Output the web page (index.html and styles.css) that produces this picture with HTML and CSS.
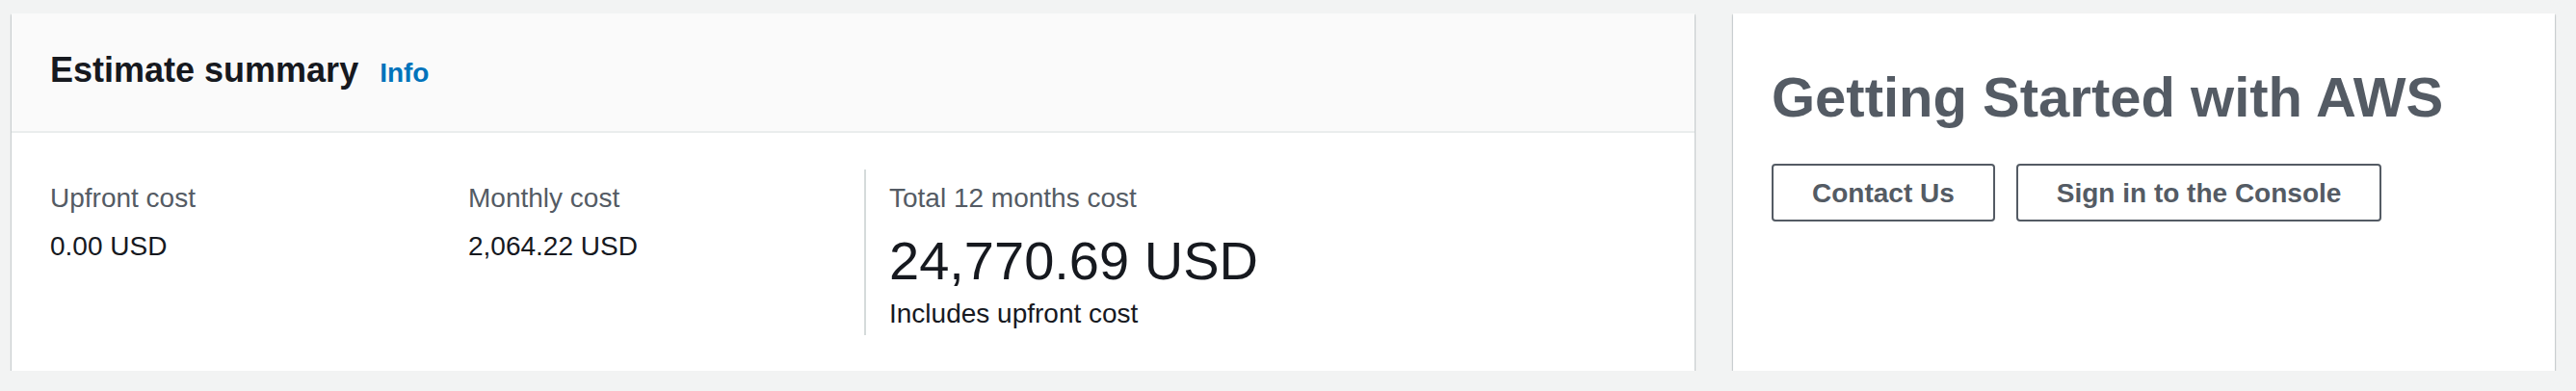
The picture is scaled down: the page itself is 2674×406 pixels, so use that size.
FILE: index.html
```html
<!DOCTYPE html>
<html lang="en">
<head>
<meta charset="utf-8">
<title>Estimate summary</title>
<link rel="stylesheet" href="styles.css">
</head>
<body>
<main class="layout">
  <section class="card summary">
    <header class="card-header">
      <h2 class="card-title">Estimate summary</h2>
      <a class="info-link" href="#">Info</a>
    </header>
    <div class="card-body">
      <div class="metric">
        <div class="metric-label">Upfront cost</div>
        <div class="metric-value">0.00 USD</div>
      </div>
      <div class="metric">
        <div class="metric-label">Monthly cost</div>
        <div class="metric-value">2,064.22 USD</div>
      </div>
      <div class="metric metric-total">
        <div class="metric-label">Total 12 months cost</div>
        <div class="metric-big">24,770.69 USD</div>
        <div class="metric-note">Includes upfront cost</div>
      </div>
    </div>
  </section>
  <section class="card getting-started">
    <h1 class="gs-title">Getting Started with AWS</h1>
    <div class="gs-actions">
      <a class="btn" href="#">Contact Us</a>
      <a class="btn" href="#">Sign in to the Console</a>
    </div>
  </section>
</main>
</body>
</html>
```
FILE: styles.css
```css
* { box-sizing: border-box; }

html, body {
  margin: 0;
  padding: 0;
  background: #f2f3f3;
  font-family: "Liberation Sans", Arial, sans-serif;
  color: #16191f;
}

.layout {
  display: grid;
  grid-template-columns: 1747px 853px;
  column-gap: 40px;
  padding: 14px 22px 0 12px;
}

.card {
  background: #ffffff;
  height: 371px;
  box-shadow: 0 2px 2px 0 rgba(0, 28, 36, 0.22),
              1px 1px 1px 0 rgba(0, 28, 36, 0.1),
              -1px 1px 1px 0 rgba(0, 28, 36, 0.1);
}

.card-header {
  display: flex;
  align-items: baseline;
  gap: 22px;
  background: #fafafa;
  border-bottom: 2px solid #eaeded;
  padding: 37px 40px 38px 40px;
}

.card-title {
  margin: 0;
  font-size: 36px;
  line-height: 44px;
  font-weight: 700;
  color: #16191f;
}

.info-link {
  font-size: 28px;
  line-height: 44px;
  font-weight: 700;
  color: #0073bb;
  text-decoration: none;
}

.card-body {
  display: grid;
  grid-template-columns: 434px 411px 1fr;
  padding: 38px 40px 41px 40px;
}

.metric {
  padding-top: 10px;
  min-height: 172px;
}

.metric-total {
  border-left: 2px solid #d5dbdb;
  padding-left: 24px;
}

.metric-label {
  font-size: 28px;
  line-height: 40px;
  color: #545b64;
  margin-bottom: 10px;
}

.metric-value {
  font-size: 28px;
  line-height: 40px;
  color: #16191f;
  margin-top: 1px;
}

.metric-big {
  font-size: 56px;
  line-height: 70px;
  color: #16191f;
}

.metric-note {
  font-size: 28px;
  line-height: 40px;
  color: #16191f;
}

.getting-started {
  padding: 51px 40px 0 40px;
}

.gs-title {
  margin: 0;
  font-size: 58px;
  line-height: 72px;
  font-weight: 700;
  color: #545b64;
}

.gs-actions {
  display: flex;
  gap: 22px;
  margin-top: 33px;
}

.btn {
  display: inline-block;
  border: 2px solid #545b64;
  border-radius: 4px;
  padding: 9px 40px 7px 40px;
  font-size: 28px;
  line-height: 40px;
  font-weight: 700;
  color: #545b64;
  text-decoration: none;
  background: #ffffff;
}
```
